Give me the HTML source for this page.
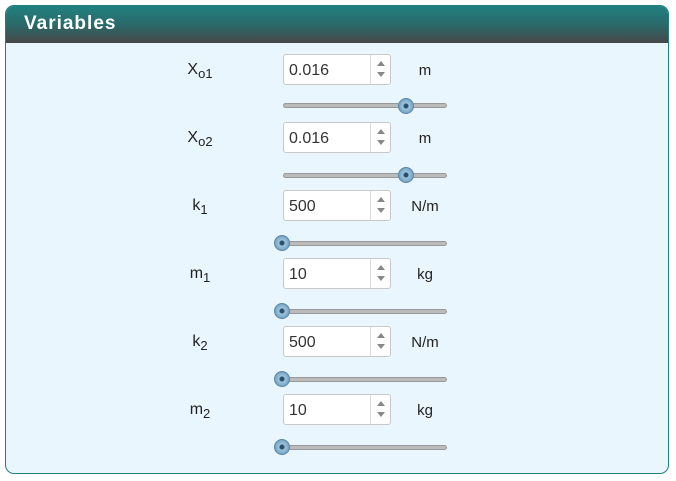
<!DOCTYPE html>
<html><head><style>
*{margin:0;padding:0;box-sizing:border-box}
body{width:676px;height:481px;background:#fff;font-family:"Liberation Sans",sans-serif;position:relative;overflow:hidden}
.panel{position:absolute;left:5px;top:5px;width:664px;height:469px;border:1px solid #1f7f7f;border-radius:9px;background:#eaf6fd;overflow:hidden}
.hdr{height:37px;background:linear-gradient(#218080,#2a6a6a 50%,#474747);color:#fff;font-weight:bold;font-size:19px;letter-spacing:1px;padding:7px 0 0 18px}
.lab{position:absolute;width:80px;text-align:center;font-size:16px;color:#222}
.lab sub{font-size:13px;vertical-align:-4px}
.inp{position:absolute;left:283px;width:108px;height:31px;border:1px solid #c8c8c8;border-radius:3px;background:#fff;font-size:16px;color:#333;padding:7px 0 0 5px}
.spin{position:absolute;right:0;top:0;width:20px;height:29px;border-left:1px solid #ddd}
.spin:before{content:"";position:absolute;left:6px;top:6px;border:4px solid transparent;border-bottom:5px solid #888;border-top:0}
.spin:after{content:"";position:absolute;left:6px;top:17px;border:4px solid transparent;border-top:5px solid #888;border-bottom:0}
.unit{position:absolute;left:405px;width:40px;text-align:center;font-size:15px;color:#222}
.trk{position:absolute;left:283px;width:164px;height:5px;border-radius:3px;background:#bbb;border:1px solid #999}
.th{position:absolute;width:16px;height:16px;border-radius:50%;background:radial-gradient(circle,#2a4f6a 0 2px,#9cc4de 3px,#6f9dbf 8px);border:1px solid #5b87a8}
</style></head><body>
<div class="panel"><div class="hdr">Variables</div></div>

<div class="lab" style="left:160px;top:61px">X<sub>o1</sub></div>
<div class="inp" style="top:54px">0.016<div class="spin"></div></div>
<div class="unit" style="top:62px">m</div>
<div class="trk" style="top:103px"></div><div class="th" style="left:398px;top:98px"></div>

<div class="lab" style="left:160px;top:129px">X<sub>o2</sub></div>
<div class="inp" style="top:122px">0.016<div class="spin"></div></div>
<div class="unit" style="top:130px">m</div>
<div class="trk" style="top:173px"></div><div class="th" style="left:398px;top:167px"></div>

<div class="lab" style="left:160px;top:197px">k<sub>1</sub></div>
<div class="inp" style="top:190px">500<div class="spin"></div></div>
<div class="unit" style="top:198px">N/m</div>
<div class="trk" style="top:241px"></div><div class="th" style="left:274px;top:235px"></div>

<div class="lab" style="left:160px;top:265px">m<sub>1</sub></div>
<div class="inp" style="top:258px">10<div class="spin"></div></div>
<div class="unit" style="top:266px">kg</div>
<div class="trk" style="top:309px"></div><div class="th" style="left:274px;top:303px"></div>

<div class="lab" style="left:160px;top:333px">k<sub>2</sub></div>
<div class="inp" style="top:326px">500<div class="spin"></div></div>
<div class="unit" style="top:334px">N/m</div>
<div class="trk" style="top:377px"></div><div class="th" style="left:274px;top:371px"></div>

<div class="lab" style="left:160px;top:401px">m<sub>2</sub></div>
<div class="inp" style="top:394px">10<div class="spin"></div></div>
<div class="unit" style="top:402px">kg</div>
<div class="trk" style="top:445px"></div><div class="th" style="left:274px;top:439px"></div>
</body></html>
